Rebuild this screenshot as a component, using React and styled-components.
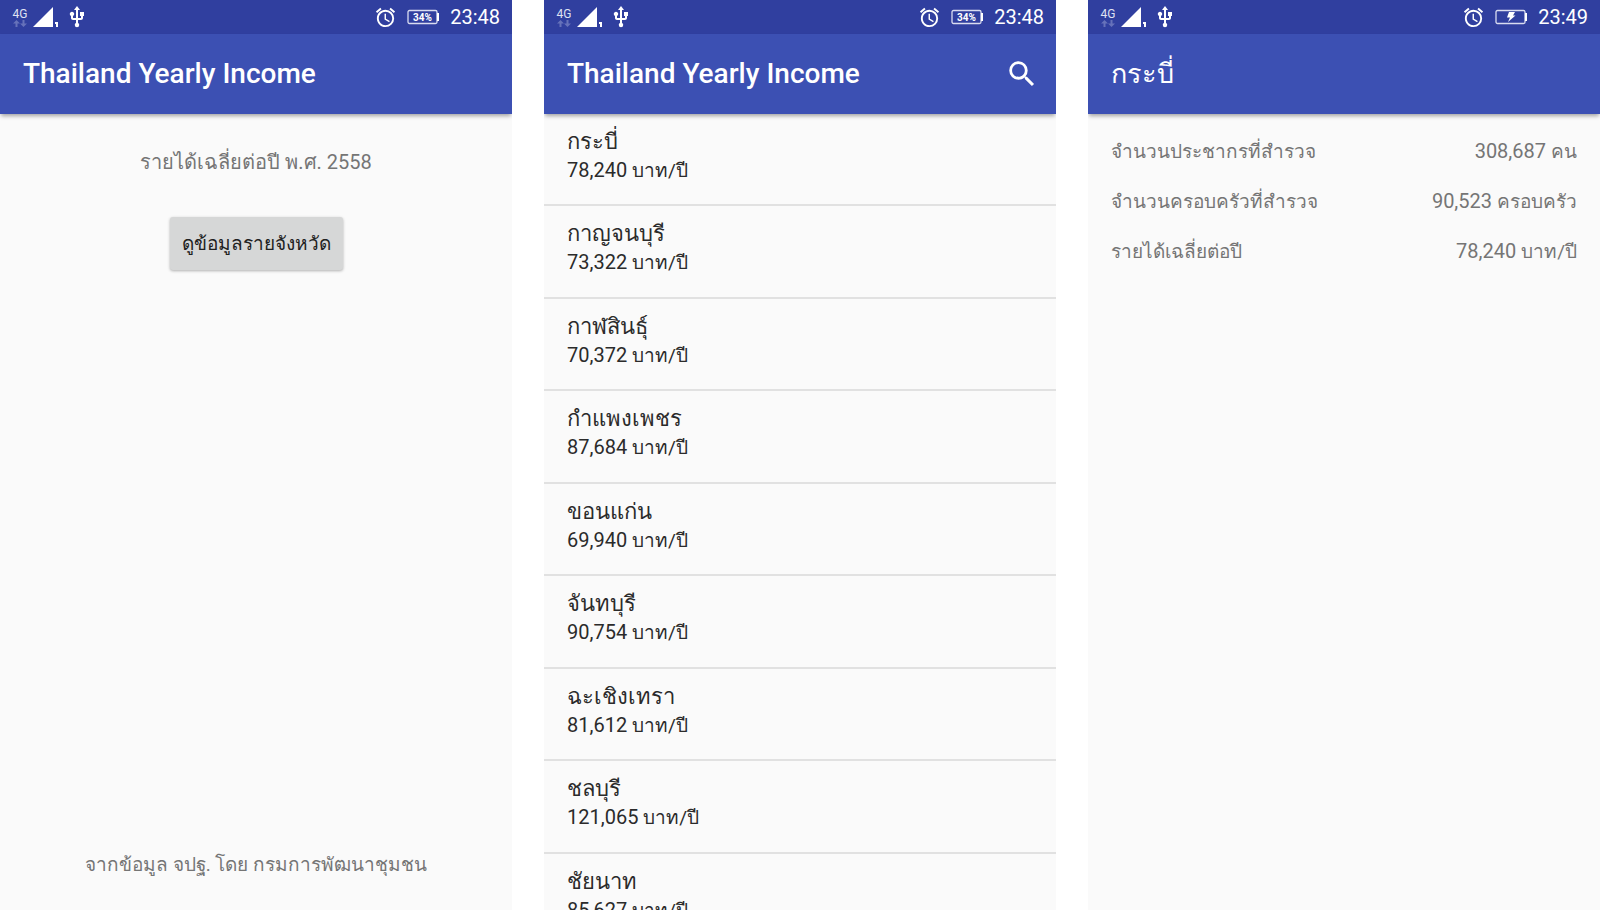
import React from 'react';
import styled, { createGlobalStyle } from 'styled-components';
import { MdSearch, MdUsb, MdOutlineAccessAlarm } from 'react-icons/md';

const GlobalStyle = createGlobalStyle`
  * { box-sizing: border-box; }
  body {
    margin: 0;
    background: #ffffff;
    font-family: Roboto, sans-serif;
    font-size: 20px;
  }
`;

const Screens = styled.main`
  display: grid;
  grid-template-columns: repeat(3, minmax(0, 1fr));
  gap: 32px;
  height: 100vh;
`;

const Screen = styled.section`
  display: flex;
  flex-direction: column;
  min-height: 0;
  background: #fafafa;
  overflow: hidden;
`;

const StatusBarRow = styled.div`
  display: flex;
  flex: none;
  align-items: center;
  justify-content: space-between;
  height: 34px;
  padding: 0 12px;
  background: #303f9f;
  color: #ffffff;
`;

const StatusGroup = styled.div`
  display: flex;
  align-items: center;
  gap: ${(p) => p.$gap}px;
`;

const Network = styled.div`
  display: flex;
  flex-direction: column;
  align-items: center;
  width: 16px;
  font-size: 12px;
  line-height: 12px;
  color: #dfe2f2;
`;

const Time = styled.time`
  font-size: 20px;
  line-height: 36px;
`;

const BatteryText = styled.text`
  font: bold 10px Roboto, sans-serif;
  fill: #ffffff;
  text-anchor: middle;
`;

const AppBar = styled.header`
  position: relative;
  display: flex;
  flex: none;
  align-items: center;
  justify-content: space-between;
  height: 80px;
  padding: 0 17px 0 23px;
  background: #3c50b3;
  color: #ffffff;
  box-shadow: 0 3px 4px -1px rgba(0, 0, 0, 0.35);
`;

const Title = styled.h1`
  margin: 0;
  font-size: ${(p) => (p.$thai ? 27 : 28)}px;
  font-weight: ${(p) => (p.$thai ? 400 : 500)};
  line-height: 40px;
`;

const IconButton = styled.button`
  display: flex;
  padding: 0;
  border: 0;
  background: none;
  color: inherit;
  cursor: pointer;
`;

const Thai = styled.span`
  font-size: 19px;
  line-height: 1;
`;

const Home = styled.div`
  display: flex;
  flex: 1;
  flex-direction: column;
  align-items: center;
  padding: 32px 24px 30px;
  color: #757575;
`;

const Caption = styled.p`
  margin: 0;
  line-height: 32px;
`;

const RaisedButton = styled.button`
  margin: 39px 0 auto;
  height: 53px;
  padding: 0 12px 2px;
  border: 0;
  border-radius: 3px;
  background: #d6d7d7;
  color: #212121;
  font: 500 19px Roboto, sans-serif;
  box-shadow: 0 1px 3px rgba(0, 0, 0, 0.3);
  cursor: pointer;
`;

const List = styled.ul`
  flex: 1;
  min-height: 0;
  margin: 0;
  padding: 0;
  overflow: hidden;
  list-style: none;
`;

const Row = styled.li`
  height: 92px;
  border-bottom: 2px solid #e1e1e1;

  &:nth-child(even) {
    height: 93px;
  }
`;

const RowLink = styled.a`
  display: block;
  padding: 13px 23px;
  color: #2b2b2b;
  text-decoration: none;
`;

const Province = styled.div`
  font-size: 22px;
  line-height: 29px;
`;

const Amount = styled.div`
  line-height: 29px;
`;

const Details = styled.dl`
  margin: 0;
  padding: 12px 23px;
  color: #757575;
`;

const Detail = styled.div`
  display: flex;
  justify-content: space-between;
  height: 50px;
  line-height: 50px;
`;

const Value = styled.dd`
  margin: 0;
`;

const provinces = [
  ['กระบี่', '78,240'],
  ['กาญจนบุรี', '73,322'],
  ['กาฬสินธุ์', '70,372'],
  ['กำแพงเพชร', '87,684'],
  ['ขอนแก่น', '69,940'],
  ['จันทบุรี', '90,754'],
  ['ฉะเชิงเทรา', '81,612'],
  ['ชลบุรี', '121,065'],
  ['ชัยนาท', '85,627'],
];

const details = [
  ['จำนวนประชากรที่สำรวจ', '308,687', 'คน'],
  ['จำนวนครอบครัวที่สำรวจ', '90,523', 'ครอบครัว'],
  ['รายได้เฉลี่ยต่อปี', '78,240', 'บาท/ปี'],
];

function StatusBar({ time, charging }) {
  return (
    <StatusBarRow>
      <StatusGroup $gap={4}>
        <Network>
          4G
          <svg width="14" height="7" viewBox="0 0 14 7" fill="#6672ba">
            <path d="M3.5 0 7 3.5H4.5V7h-2V3.5H0zM10.500 7 14 3.500h-2.500V0h-2v3.500H7z" />
          </svg>
        </Network>
        <svg width="29" height="21" viewBox="0 0 29 21" fill="#fff">
          <path d="M1 20 21 0v20zM23 15h3v5h-2v-3h-1z" />
        </svg>
        <MdUsb size={24} />
      </StatusGroup>
      <StatusGroup $gap={10}>
        <MdOutlineAccessAlarm size={23} />
        <svg width="33" height="16" viewBox="0 0 33 16">
          <rect x="1" y="1.500" width="29" height="13" rx="1.500" fill="none" stroke="#d9dcf0" strokeWidth="1.300" />
          <path d="M30 4h2v8h-2z" fill="#fff" />
          {charging ? (
            <path d="M14 3h6l-2 3.500h2.500L13 13l2-4.500h-3z" fill="#fff" />
          ) : (
            <BatteryText x="15.500" y="11.500">34%</BatteryText>
          )}
        </svg>
        <Time>{time}</Time>
      </StatusGroup>
    </StatusBarRow>
  );
}

export default function App() {
  return (
    <>
      <GlobalStyle />
      <Screens>
        <Screen>
          <StatusBar time="23:48" />
          <AppBar>
            <Title>Thailand Yearly Income</Title>
          </AppBar>
          <Home>
            <Caption>รายได้เฉลี่ยต่อปี พ.ศ. 2558</Caption>
            <RaisedButton type="button">ดูข้อมูลรายจังหวัด</RaisedButton>
            <Caption>
              <Thai>จากข้อมูล จปฐ. โดย กรมการพัฒนาชุมชน</Thai>
            </Caption>
          </Home>
        </Screen>

        <Screen>
          <StatusBar time="23:48" />
          <AppBar>
            <Title>Thailand Yearly Income</Title>
            <IconButton type="button" aria-label="ค้นหา">
              <MdSearch size={34} />
            </IconButton>
          </AppBar>
          <List>
            {provinces.map(([name, income]) => (
              <Row key={name}>
                <RowLink href="#province">
                  <Province>{name}</Province>
                  <Amount>
                    {income} <Thai>บาท/ปี</Thai>
                  </Amount>
                </RowLink>
              </Row>
            ))}
          </List>
        </Screen>

        <Screen>
          <StatusBar time="23:49" charging />
          <AppBar>
            <Title $thai>กระบี่</Title>
          </AppBar>
          <Details>
            {details.map(([label, value, unit]) => (
              <Detail key={label}>
                <dt>
                  <Thai>{label}</Thai>
                </dt>
                <Value>
                  {value} <Thai>{unit}</Thai>
                </Value>
              </Detail>
            ))}
          </Details>
        </Screen>
      </Screens>
    </>
  );
}
